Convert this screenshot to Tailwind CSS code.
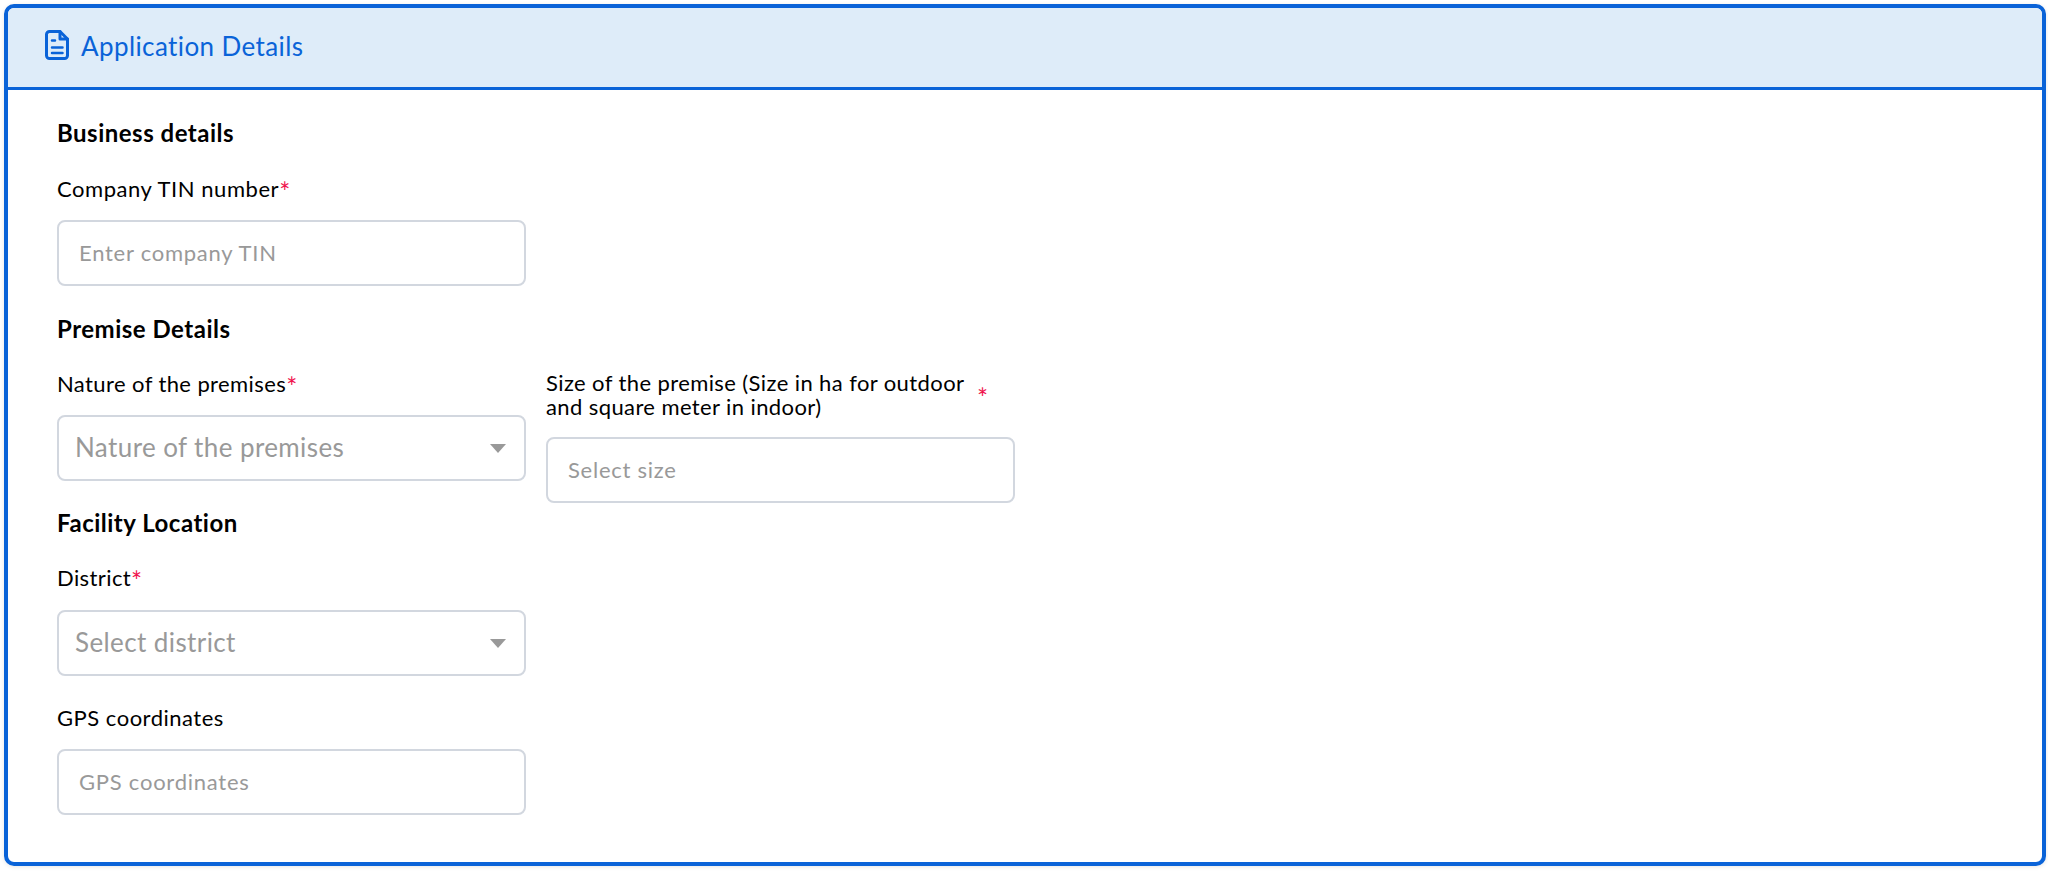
<!DOCTYPE html>
<html lang="en">
<head>
    <meta charset="UTF-8">
    <title>Application Details</title>
    <script src="https://cdn.jsdelivr.net/npm/@tailwindcss/browser@4"></script>
</head>
<body class="bg-white font-['Lato','Noto_Sans',sans-serif] text-black">
    <div class="h-[871px] pt-[4px] pl-[4px] pr-[2px] pb-[5px]">
        <div class="h-full border-[4px] border-[#0a63d8] rounded-[10px] overflow-hidden flex flex-col shadow-[0_1px_4px_rgba(0,0,0,0.1)]">
            <div class="h-[82px] shrink-0 bg-[#deecf9] border-b-[3px] border-[#0a63d8] flex items-center pl-[37px] gap-[12px]">
                <svg class="w-[24px] h-[30px] -mt-[6px]" viewBox="0 0 24 30" fill="none" stroke="#0a63d8" stroke-width="3" stroke-linecap="round" stroke-linejoin="round">
                    <path d="M4.5 1.5H15L22.5 9v16.5a3 3 0 0 1-3 3h-15a3 3 0 0 1-3-3v-21a3 3 0 0 1 3-3z"/>
                    <path d="M15 1.5V9h7.5"/>
                    <path stroke-width="2.5" d="M7 10.5h3M7 17.5h10.5M7 23h10.5"/>
                </svg>
                <h1 class="text-[26px] tracking-[0.4px] leading-none text-[#0a63d8] -mt-[3px]">Application Details</h1>
            </div>
            <div class="pl-[49px] pt-[29px]">
                <h2 class="text-[24px] tracking-[0.5px] font-bold leading-[28px]">Business details</h2>
                <label class="block mt-[27px] text-[22px] tracking-[0.55px] leading-[28px]">Company TIN number<span class="relative top-[5px] text-[#f0134d] text-[26px] leading-none">*</span></label>
                <input class="block mt-[17px] w-[469px] h-[66px] border-2 border-[#d2d7df] rounded-[8px] px-[20px] pb-[2px] text-[22px] tracking-[0.75px] placeholder:text-[#999999]" placeholder="Enter company TIN">

                <h2 class="mt-[29px] text-[24px] tracking-[0.5px] font-bold leading-[28px]">Premise Details</h2>
                <div class="flex gap-[20px] items-start">
                    <div>
                        <label class="block mt-[26px] text-[22px] tracking-[0.4px] leading-[28px]">Nature of the premises<span class="relative top-[5px] text-[#f0134d] text-[26px] leading-none">*</span></label>
                        <div class="mt-[17px] w-[469px] h-[66px] border-2 border-[#d2d7df] rounded-[8px] pl-[16px] pr-[18px] pb-[2px] flex items-center justify-between text-[26px] tracking-[0.4px] text-[#999999]">
                            <span>Nature of the premises</span>
                            <span class="w-0 h-0 mt-[2px] border-x-[8px] border-x-transparent border-t-[9px] border-t-[#999999]"></span>
                        </div>
                    </div>
                    <div>
                        <div class="flex mt-[28px] w-[469px]">
                            <label class="w-[425px] text-[22px] tracking-[0.4px] leading-[23.5px]">Size of the premise (Size in ha for outdoor and square meter in indoor)</label>
                            <span class="pl-[6px] pt-[16px] text-[26px] leading-[23px] text-[#f0134d]">*</span>
                        </div>
                        <input class="block mt-[19px] w-[469px] h-[66px] border-2 border-[#d2d7df] rounded-[8px] px-[20px] pb-[2px] text-[22px] tracking-[0.75px] placeholder:text-[#999999]" placeholder="Select size">
                    </div>
                </div>

                <h2 class="mt-[6px] text-[24px] tracking-[0.5px] font-bold leading-[28px]">Facility Location</h2>
                <label class="block mt-[26px] text-[22px] tracking-[0.4px] leading-[28px]">District<span class="relative top-[5px] text-[#f0134d] text-[26px] leading-none">*</span></label>
                <div class="mt-[18px] w-[469px] h-[66px] border-2 border-[#d2d7df] rounded-[8px] pl-[16px] pr-[18px] pb-[2px] flex items-center justify-between text-[26px] tracking-[0.4px] text-[#999999]">
                    <span>Select district</span>
                    <span class="w-0 h-0 mt-[2px] border-x-[8px] border-x-transparent border-t-[9px] border-t-[#999999]"></span>
                </div>
                <label class="block mt-[28px] text-[22px] tracking-[0.5px] leading-[28px]">GPS coordinates</label>
                <input class="block mt-[17px] w-[469px] h-[66px] border-2 border-[#d2d7df] rounded-[8px] px-[20px] pb-[2px] text-[22px] tracking-[0.75px] placeholder:text-[#999999]" placeholder="GPS coordinates">
            </div>
        </div>
    </div>
</body>
</html>
